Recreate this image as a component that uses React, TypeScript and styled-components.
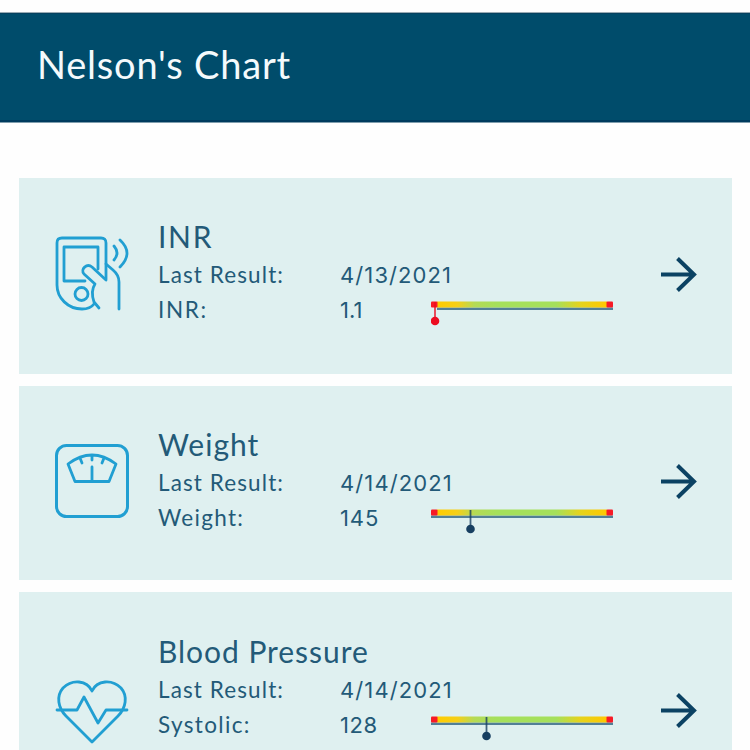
import React from "react";
import styled, { createGlobalStyle } from "styled-components";

const GlobalStyle = createGlobalStyle`
  * { box-sizing: border-box; }
  body { margin: 0; background: #fff; font-family: Lato, "Open Sans", sans-serif; }
`;

const Page = styled.main`
  height: 750px;
  overflow: hidden;
  padding-top: 12px;
  background: #fefefe;
`;

const Header = styled.header`
  display: flex;
  align-items: center;
  height: 111px;
  padding: 0 0 7px 37px;
  background: #004c6b;
  border-top: 1px solid #9aabb4;
  border-bottom: 1px solid #7f9dad;
  box-shadow: inset 0 1px #06415f, inset 0 -2px #003b5e;
`;

const Title = styled.h1<{ $track: number }>`
  margin: 0;
  font-size: 38px;
  font-weight: 400;
  line-height: 46px;
  letter-spacing: ${(p) => p.$track}px;
  color: #f4fafc;
`;

const List = styled.section`
  display: flex;
  flex-direction: column;
  gap: 12px;
  padding: 55px 18px 0 19px;
`;

const Card = styled.article<{ $height: number; $shift: number }>`
  display: grid;
  grid-template-columns: 139px 1fr 72px;
  flex: none;
  height: ${(p) => p.$height}px;
  padding-top: ${(p) => p.$shift}px;
  background: #dff0f0;
`;

const IconCell = styled.div`
  display: flex;
  align-items: center;
  padding: 0 0 4px 34px;
`;

const ArrowCell = styled.div`
  display: flex;
  align-items: center;
  padding-bottom: 3px;
`;

const Details = styled.div`
  padding-top: 37px;
  color: #235a78;
`;

const Name = styled.h2<{ $track: number }>`
  margin: 0;
  font-size: 30px;
  font-weight: 400;
  line-height: 42px;
  letter-spacing: ${(p) => p.$track}px;
`;

const Row = styled.div`
  display: grid;
  grid-template-columns: 182px 91px 184px;
  height: 35px;
  line-height: 35px;
`;

const Label = styled.span<{ $track: number }>`
  font-size: 22.5px;
  letter-spacing: ${(p) => p.$track}px;
  white-space: nowrap;
`;

const Value = styled.span<{ $track: number }>`
  padding-top: 1px;
  font-family: Inter, "Open Sans", sans-serif;
  font-size: 22px;
  letter-spacing: ${(p) => p.$track}px;
  white-space: nowrap;
`;

const RangeSlot = styled.div`
  display: flex;
  padding-top: 8px;
`;

const Drawing = styled.svg`
  display: block;
  flex: none;
  fill: none;
  stroke: #219fd2;
  stroke-width: 2.8;
  stroke-linecap: round;
  stroke-linejoin: round;
`;

function MeterIcon() {
  return (
    <Drawing width="78" height="78" viewBox="0 0 78 78">
      <path d="M53 44V8Q53 3 48 3H9Q4 3 4 8V50C4 63 15 74 29 74C34 74 38 73 41 69" />
      <path d="M32 46H11V12H45V34" />
      <circle cx="28.5" cy="59" r="6.5" />
      <path d="M53 45L39 32C34 28 27 34 31 39L42 49C38 55 39 61 41 67L46 73" />
      <path d="M53 29L60 35Q66 40 66 47V74" />
      <path d="M61 11Q67 18 61 25M67 5Q81 18 67 32" />
    </Drawing>
  );
}

function ScaleIcon() {
  return (
    <Drawing width="78" height="78" viewBox="0 0 78 78">
      <rect x="3.5" y="3.5" width="71" height="71" rx="10" strokeWidth="3" />
      <path d="M15 22Q39 4 63 22L56 39.5H22ZM39 13V18M39 25V39M27 16L29 21M51 16L49 21" />
    </Drawing>
  );
}

function HeartIcon() {
  return (
    <Drawing width="78" height="78" viewBox="0 0 78 78">
      <path d="M39 70L13 44C5 36 3 24 10 16C19 7 34 8 39 19C44 8 59 7 68 16C75 24 73 36 65 44Z" />
      <path d="M4 38H24L31 25L45 51L53 38H74" />
    </Drawing>
  );
}

const ArrowStroke = styled(Drawing)`
  stroke: #0b4263;
  stroke-width: 4;
  stroke-linecap: butt;
  stroke-linejoin: miter;
`;

function Arrow() {
  return (
    <ArrowStroke width="38" height="38" viewBox="0 0 38 38">
      <path d="M1 18.5H34M17.5 2.5L34 18.5L17.5 34.5" />
    </ArrowStroke>
  );
}

/* Coloured reference range with a pin hanging at the measured value. */
function RangeBar({ id, pin, alert }: { id: string; pin: number; alert?: boolean }) {
  const color = alert ? "#ec0c20" : "#173f61";
  return (
    <svg width="184" height="30" viewBox="0 0 184 30">
      <defs>
        <linearGradient id={id}>
          <stop offset="0" stopColor="#ffcc00" />
          <stop offset="0.12" stopColor="#f5cf18" />
          <stop offset="0.22" stopColor="#b5da55" />
          <stop offset="0.35" stopColor="#a5e05b" />
          <stop offset="0.7" stopColor="#a5e05b" />
          <stop offset="0.84" stopColor="#e5d31d" />
          <stop offset="1" stopColor="#ffc800" />
        </linearGradient>
      </defs>
      <rect x={alert ? 6 : 0} y="7.5" width={alert ? 176 : 182} height="2.5" fill="#527f96" />
      <rect x="6" y="1.5" width="170" height="6" fill={`url(#${id})`} />
      <rect x="0" y="1.5" width="6.5" height="6" rx="1" fill="#f71a25" />
      <rect x="175.5" y="1.5" width="6.5" height="6" rx="1" fill="#f71a25" />
      <path d={`M${pin} 2V21`} stroke={color} strokeWidth="1.8" strokeOpacity="0.8" />
      <circle cx={pin} cy="21" r="4.3" fill={color} />
    </svg>
  );
}

type Entry = {
  name: string;
  nameTrack: number;
  label: string;
  labelTrack: number;
  date: string;
  value: string;
  valueTrack: number;
  pin: number;
  alert?: boolean;
  height: number;
  shift: number;
  icon: React.ReactNode;
};

const entries: Entry[] = [
  { name: "INR", nameTrack: 1.7, label: "INR:", labelTrack: 1.6, date: "4/13/2021", value: "1.1", valueTrack: 0, pin: 4, alert: true, height: 196, shift: 0, icon: <MeterIcon /> },
  { name: "Weight", nameTrack: 1, label: "Weight:", labelTrack: 1.3, date: "4/14/2021", value: "145", valueTrack: 0.9, pin: 39.5, height: 194, shift: 0, icon: <ScaleIcon /> },
  { name: "Blood Pressure", nameTrack: 0.95, label: "Systolic:", labelTrack: 1.35, date: "4/14/2021", value: "128", valueTrack: 0.6, pin: 55.5, height: 240, shift: 1, icon: <HeartIcon /> },
];

export default function App() {
  return (
    <>
      <GlobalStyle />
      <Page>
        <Header>
          <Title $track={0.8}>Nelson's Chart</Title>
        </Header>
        <List>
          {entries.map((e) => (
            <Card key={e.name} $height={e.height} $shift={e.shift}>
              <IconCell>{e.icon}</IconCell>
              <Details>
                <Name $track={e.nameTrack}>{e.name}</Name>
                <Row>
                  <Label $track={1.1}>Last Result:</Label>
                  <Value $track={1.1}>{e.date}</Value>
                </Row>
                <Row>
                  <Label $track={e.labelTrack}>{e.label}</Label>
                  <Value $track={e.valueTrack}>{e.value}</Value>
                  <RangeSlot>
                    <RangeBar id={`range-${e.value.replace(".", "-")}`} pin={e.pin} alert={e.alert} />
                  </RangeSlot>
                </Row>
              </Details>
              <ArrowCell>
                <Arrow />
              </ArrowCell>
            </Card>
          ))}
        </List>
      </Page>
    </>
  );
}
